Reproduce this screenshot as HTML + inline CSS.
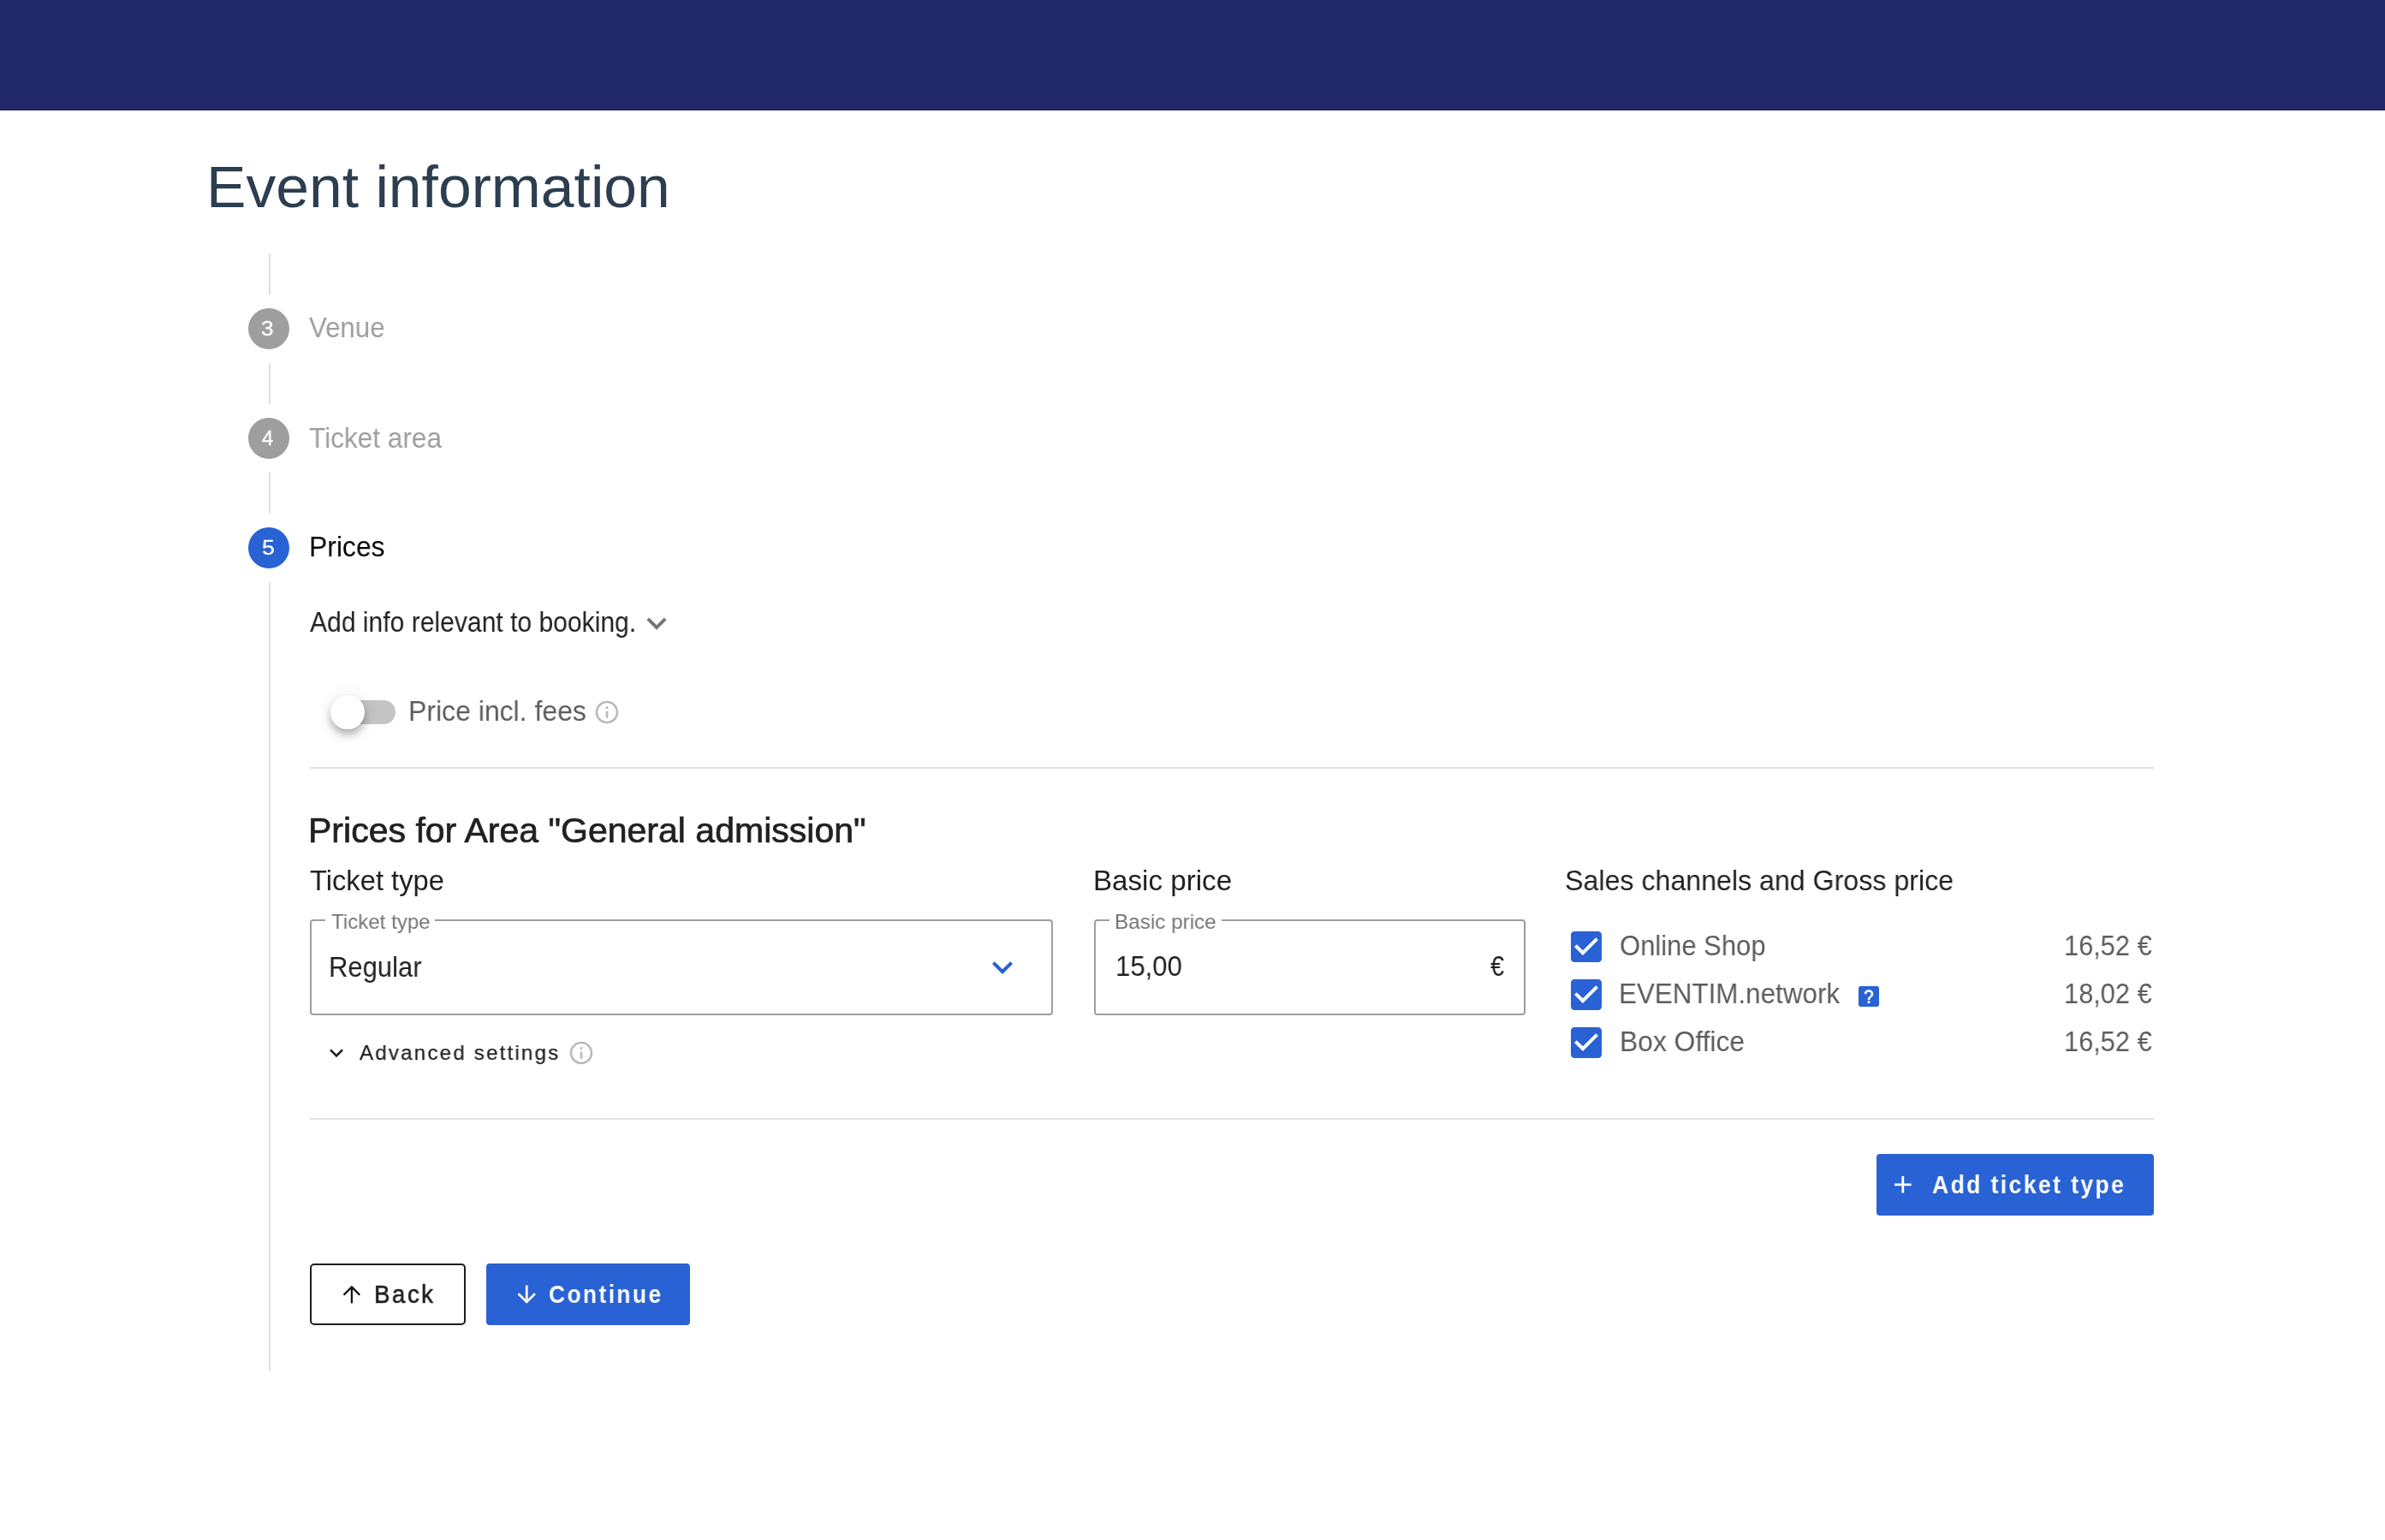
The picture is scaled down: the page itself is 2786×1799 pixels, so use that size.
<!DOCTYPE html>
<html><head><meta charset="utf-8">
<style>
html,body{margin:0;padding:0;background:#fff;width:2786px;height:1799px;overflow:hidden;position:relative;font-family:"Liberation Sans",sans-serif;}
.tx{position:absolute;white-space:nowrap;line-height:1;transform-origin:0 0;will-change:transform;}
.abs{position:absolute;}
#hdr{left:0;top:0;width:2786px;height:128px;background:#20286a;border-bottom:1px solid #161b5c;}
.vline{position:absolute;left:314px;width:2px;background:#e0e0e0;}
.circ{position:absolute;left:290px;width:48px;height:48px;border-radius:50%;}
.divider{position:absolute;left:362px;width:2154px;height:2px;background:#e0e0e0;}
.field{position:absolute;border:2px solid #9e9e9e;border-radius:4px;box-sizing:border-box;}
.legendgap{position:absolute;background:#fff;height:6px;}
.cb{position:absolute;left:1829px;width:48px;height:48px;}
.btn{position:absolute;box-sizing:border-box;border-radius:4px;}
</style></head><body>
<div id="hdr" class="abs"></div>
<div class="vline" style="top:296px;height:48px"></div>
<div class="vline" style="top:424px;height:48px"></div>
<div class="vline" style="top:552px;height:48px"></div>
<div class="vline" style="top:680px;height:922px"></div>
<div class="circ" style="top:360px;background:#9e9e9e"></div>
<div class="circ" style="top:488px;background:#9e9e9e"></div>
<div class="circ" style="top:616px;background:#2962d4"></div>
<!-- chevron add info -->
<svg class="abs" style="left:743.6px;top:705.1px" width="46" height="46" viewBox="0 0 24 24"><path fill="#757575" d="M7.41 8.59 12 13.17l4.59-4.58L18 10l-6 6-6-6 1.41-1.41z"/></svg>
<!-- toggle -->
<div class="abs" style="left:390px;top:818px;width:72px;height:28px;border-radius:14px;background:#c4c4c4"></div>
<div class="abs" style="left:386px;top:812px;width:40px;height:40px;border-radius:50%;background:#fff;box-shadow:0 4px 8px -2px rgba(0,0,0,.2),0 8px 10px 0 rgba(0,0,0,.14),0 2px 20px 0 rgba(0,0,0,.12)"></div>
<!-- info icon 1 -->
<svg class="abs" style="left:692.6px;top:816.2px" width="32" height="32" viewBox="0 0 24 24"><path fill="#bababa" d="M11 7h2v2h-2zm0 4h2v6h-2zm1-9C6.48 2 2 6.48 2 12s4.48 10 10 10 10-4.48 10-10S17.52 2 12 2zm0 18c-4.41 0-8-3.59-8-8s3.59-8 8-8 8 3.59 8 8-3.59 8-8 8z"/></svg>
<div class="divider" style="top:896px"></div>
<!-- fields -->
<div class="field" style="left:362px;top:1074px;width:868px;height:112px"></div>
<div class="legendgap" style="left:380px;top:1072px;width:128px"></div>
<svg class="abs" style="left:1146.6px;top:1106px" width="48" height="48" viewBox="0 0 24 24"><path fill="#2962d4" d="M7.41 8.59 12 13.17l4.59-4.58L18 10l-6 6-6-6 1.41-1.41z"/></svg>
<div class="field" style="left:1278px;top:1074px;width:504px;height:112px"></div>
<div class="legendgap" style="left:1296px;top:1072px;width:131px"></div>
<!-- checkboxes -->
<svg class="cb" style="top:1082px" viewBox="0 0 24 24"><path fill="#2962d4" d="M19 3H5c-1.11 0-2 .9-2 2v14c0 1.1.89 2 2 2h14c1.11 0 2-.9 2-2V5c0-1.1-.89-2-2-2zm-9 14l-5-5 1.41-1.41L10 14.17l7.59-7.59L19 8l-9 9z"/></svg>
<svg class="cb" style="top:1138px" viewBox="0 0 24 24"><path fill="#2962d4" d="M19 3H5c-1.11 0-2 .9-2 2v14c0 1.1.89 2 2 2h14c1.11 0 2-.9 2-2V5c0-1.1-.89-2-2-2zm-9 14l-5-5 1.41-1.41L10 14.17l7.59-7.59L19 8l-9 9z"/></svg>
<svg class="cb" style="top:1194px" viewBox="0 0 24 24"><path fill="#2962d4" d="M19 3H5c-1.11 0-2 .9-2 2v14c0 1.1.89 2 2 2h14c1.11 0 2-.9 2-2V5c0-1.1-.89-2-2-2zm-9 14l-5-5 1.41-1.41L10 14.17l7.59-7.59L19 8l-9 9z"/></svg>
<!-- ? badge -->
<svg class="abs" style="left:2166.9px;top:1148px" width="32" height="32" viewBox="0 0 24 24"><path fill="#2962d4" d="M11,18H13V16H11V18M12,6A4,4 0 0,0 8,10H10A2,2 0 0,1 12,8A2,2 0 0,1 14,10C14,12 11,11.75 11,15H13C13,12.75 16,12.5 16,10A4,4 0 0,0 12,6M5,3H19A2,2 0 0,1 21,5V19A2,2 0 0,1 19,21H5A2,2 0 0,1 3,19V5A2,2 0 0,1 5,3Z"/></svg>
<!-- advanced settings -->
<svg class="abs" style="left:377.3px;top:1214.2px" width="32" height="32" viewBox="0 0 24 24"><path fill="#212121" d="M7.41 8.59 12 13.17l4.59-4.58L18 10l-6 6-6-6 1.41-1.41z"/></svg>
<svg class="abs" style="left:662.5px;top:1213.9px" width="32" height="32" viewBox="0 0 24 24"><path fill="#bababa" d="M11 7h2v2h-2zm0 4h2v6h-2zm1-9C6.48 2 2 6.48 2 12s4.48 10 10 10 10-4.48 10-10S17.52 2 12 2zm0 18c-4.41 0-8-3.59-8-8s3.59-8 8-8 8 3.59 8 8-3.59 8-8 8z"/></svg>
<div class="divider" style="top:1306px"></div>
<!-- buttons -->
<div class="btn" style="left:2192px;top:1348px;width:324px;height:72px;background:#2962d4"></div>
<svg class="abs" style="left:2206.4px;top:1367.4px" width="33.6" height="33.6" viewBox="0 0 24 24"><path fill="#fff" d="M19 13h-6v6h-2v-6H5v-2h6V5h2v6h6v2z"/></svg>
<div class="btn" style="left:362px;top:1476px;width:182px;height:72px;border:2px solid #1e1e1e;border-radius:5px"></div>
<svg class="abs" style="left:395px;top:1495px" width="32" height="32" viewBox="0 0 32 32"><path fill="none" stroke="#111" stroke-width="2.2" stroke-linecap="round" stroke-linejoin="miter" d="M7.2 17.1 L15.9 8.4 L24.6 17.1 M15.9 8.6 V26.6"/></svg>
<div class="btn" style="left:568px;top:1476px;width:238px;height:72px;background:#2962d4"></div>
<svg class="abs" style="left:599.1px;top:1495.6px" width="32.5" height="32.5" viewBox="0 0 24 24"><path fill="#fff" d="M11,4H13V16L18.5,10.5L19.92,11.92L12,19.84L4.08,11.92L5.5,10.5L11,16V4Z"/></svg>
<div id="title" class="tx" style="left:241.14px;top:183.97px;font-size:69.36px;color:#2c3e50;font-weight:400;transform:scaleX(1.0038)">Event information</div>
<div id="venue" class="tx" style="left:361.45px;top:366.76px;font-size:32.64px;color:#9e9e9e;font-weight:400;transform:scaleX(0.9564)">Venue</div>
<div id="tarea" class="tx" style="left:361.00px;top:495.56px;font-size:32.64px;color:#9e9e9e;font-weight:400;transform:scaleX(0.9680)">Ticket area</div>
<div id="prices" class="tx" style="left:360.70px;top:623.16px;font-size:32.64px;color:#000000;font-weight:400;transform:scaleX(0.9768)">Prices</div>
<div id="addinfo" class="tx" style="left:362.13px;top:710.96px;font-size:32.64px;color:#212121;font-weight:400;transform:scaleX(0.9217)">Add info relevant to booking.</div>
<div id="pif" class="tx" style="left:476.60px;top:815.16px;font-size:32.64px;color:#5c5c5c;font-weight:400;transform:scaleX(0.9801)">Price incl. fees</div>
<div id="heading" class="tx" style="left:359.95px;top:950.35px;font-size:40.80px;color:#212121;font-weight:400;-webkit-text-stroke:0.7px #212121;transform:scaleX(1.0056)">Prices for Area "General admission"</div>
<div id="tt" class="tx" style="left:362.44px;top:1013.16px;font-size:32.64px;color:#212121;font-weight:400;transform:scaleX(1.0022)">Ticket type</div>
<div id="bp" class="tx" style="left:1276.97px;top:1013.36px;font-size:32.64px;color:#212121;font-weight:400;transform:scaleX(1.0161)">Basic price</div>
<div id="sc" class="tx" style="left:1828.28px;top:1013.46px;font-size:32.64px;color:#212121;font-weight:400;transform:scaleX(0.9857)">Sales channels and Gross price</div>
<div id="lg1" class="tx" style="left:386.83px;top:1064.97px;font-size:24.48px;color:#757575;font-weight:400;transform:scaleX(0.9845)">Ticket type</div>
<div id="regular" class="tx" style="left:384.02px;top:1113.56px;font-size:32.64px;color:#212121;font-weight:400;transform:scaleX(0.9494)">Regular</div>
<div id="lg2" class="tx" style="left:1301.70px;top:1064.97px;font-size:24.48px;color:#757575;font-weight:400;transform:scaleX(0.9917)">Basic price</div>
<div id="v1500" class="tx" style="left:1303.01px;top:1113.46px;font-size:32.64px;color:#212121;font-weight:400;transform:scaleX(0.9540)">15,00</div>
<div id="euro" class="tx" style="left:1740.64px;top:1113.46px;font-size:32.64px;color:#212121;font-weight:400;transform:scaleX(0.8775)">€</div>
<div id="os" class="tx" style="left:1892.45px;top:1088.86px;font-size:32.64px;color:#5c5c5c;font-weight:400;transform:scaleX(0.9495)">Online Shop</div>
<div id="en" class="tx" style="left:1891.34px;top:1144.86px;font-size:32.64px;color:#5c5c5c;font-weight:400;transform:scaleX(0.9617)">EVENTIM.network</div>
<div id="bo" class="tx" style="left:1892.08px;top:1200.86px;font-size:32.64px;color:#5c5c5c;font-weight:400;transform:scaleX(0.9739)">Box Office</div>
<div id="p1" class="tx" style="left:2411.26px;top:1088.86px;font-size:32.64px;color:#5c5c5c;font-weight:400;transform:scaleX(0.9428)">16,52 €</div>
<div id="p2" class="tx" style="left:2411.26px;top:1144.86px;font-size:32.64px;color:#5c5c5c;font-weight:400;transform:scaleX(0.9428)">18,02 €</div>
<div id="p3" class="tx" style="left:2411.26px;top:1200.86px;font-size:32.64px;color:#5c5c5c;font-weight:400;transform:scaleX(0.9428)">16,52 €</div>
<div id="adv" class="tx" style="left:420.39px;top:1217.97px;font-size:24.48px;color:#212121;font-weight:400;letter-spacing:2.203px;-webkit-text-stroke:0.25px #212121;transform:scaleX(0.9873)">Advanced settings</div>
<div id="back" class="tx" style="left:437.43px;top:1497.90px;font-size:29.17px;color:#212121;font-weight:400;letter-spacing:2.625px;-webkit-text-stroke:0.6px #212121;transform:scaleX(0.9496)">Back</div>
<div id="cont" class="tx" style="left:641.45px;top:1497.90px;font-size:29.17px;color:#ffffff;font-weight:700;letter-spacing:2.625px;transform:scaleX(0.9063)">Continue</div>
<div id="att" class="tx" style="left:2257.06px;top:1370.30px;font-size:29.17px;color:#ffffff;font-weight:700;letter-spacing:2.625px;transform:scaleX(0.9110)">Add ticket type</div>
<div id="d3" class="tx" style="left:305.47px;top:372.37px;font-size:24.48px;color:#ffffff;font-weight:400;-webkit-text-stroke:0.3px #ffffff;transform:scaleX(1.0694)">3</div>
<div id="d4" class="tx" style="left:306.47px;top:500.37px;font-size:24.48px;color:#ffffff;font-weight:400;-webkit-text-stroke:0.3px #ffffff;transform:scaleX(0.9713)">4</div>
<div id="d5" class="tx" style="left:306.07px;top:628.37px;font-size:24.48px;color:#ffffff;font-weight:400;-webkit-text-stroke:0.3px #ffffff;transform:scaleX(1.0904)">5</div>
</body></html>
